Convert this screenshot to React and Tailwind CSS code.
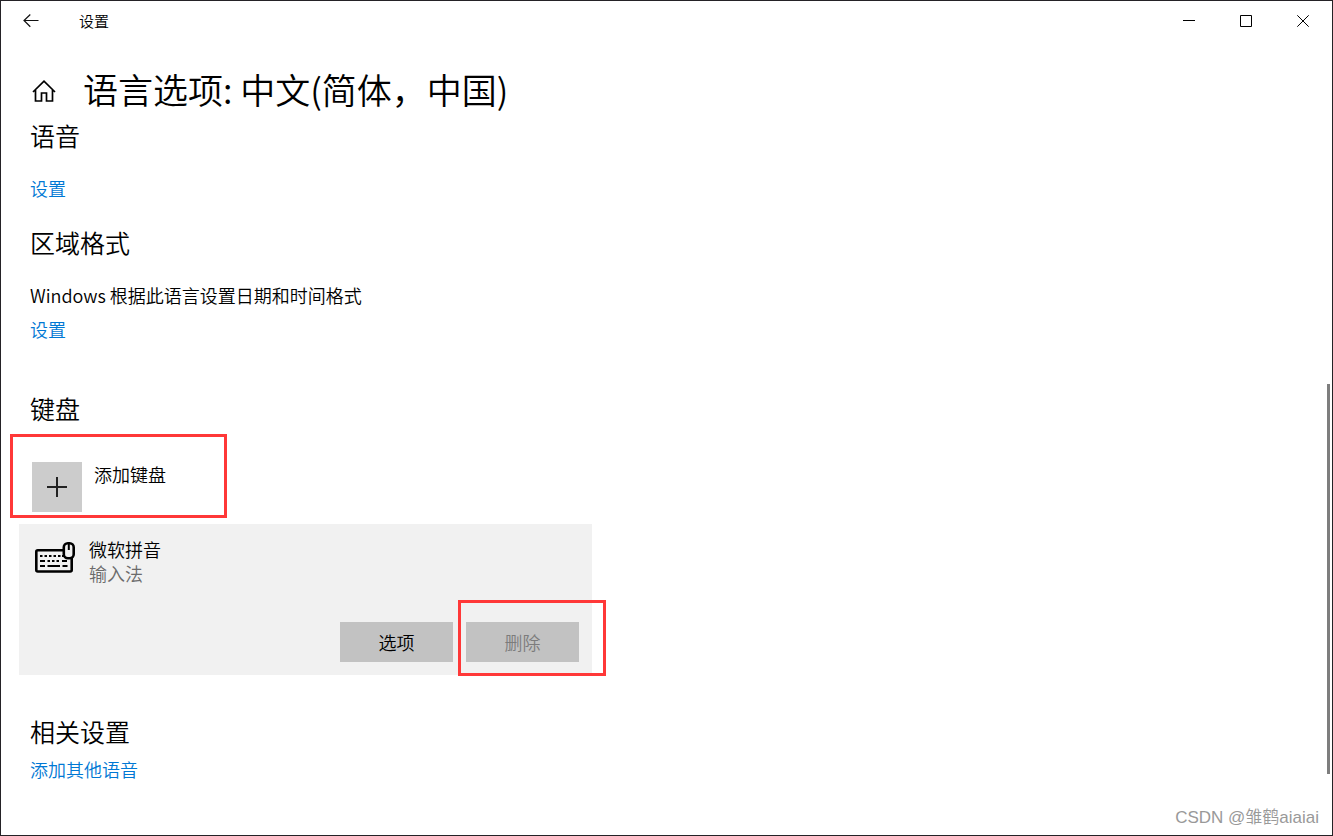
import React from 'react';

const BackIcon = () => (
    <svg width="16" height="14" viewBox="0 0 16 14" fill="none" stroke="#111" strokeWidth="1.2">
        <path d="M15.5 6.5H1M7.3 .5L1 6.5l6.3 6.2" />
    </svg>
);

const HomeIcon = () => (
    <svg width="24" height="22" viewBox="0 0 24 22" fill="none" stroke="#000" strokeWidth="1.7">
        <path d="M1 12L12 1.200l11 10.800M3.500 9.800v11.200h6v-8h5v8h6V9.800" />
    </svg>
);

const KeyboardIcon = () => (
    <svg width="40" height="31" viewBox="0 0 40 31" fill="none" stroke="#000">
        <rect x="1.300" y="8.300" width="35.400" height="21.200" rx="1.500" strokeWidth="2.600" />
        <path d="M5 14h2.500M9.500 14h2.500M14 14h2.500M18.500 14h2.500M23 14h2.500M27 14h2" strokeWidth="2" />
        <path d="M5 19h5M12.500 19h2.500M17 19h2.500M21.500 19h2.500M27 19h5" strokeWidth="2" />
        <path d="M5 24h5M12.500 24h12.500M27.500 24h5" strokeWidth="2" />
        <rect x="28.800" y="1.300" width="9.900" height="15" rx="4" fill="#f1f1f1" strokeWidth="2.600" />
        <path d="M33.800 1v7" strokeWidth="2" />
    </svg>
);

const windowButtons = [
    { label: '最小化', path: 'M0 5.500h12' },
    { label: '最大化', path: 'M.5 .5h11v11H.5z' },
    { label: '关闭', path: 'M.3 .3l11.400 11.400M11.700 .3L.3 11.700' },
];

const TitleBar = () => (
    <header className="flex h-10 items-center justify-between pr-px">
        <div className="flex items-center">
            <button type="button" aria-label="返回" className="flex h-10 w-[59px] items-center justify-center">
                <BackIcon />
            </button>
            <span className="ml-[19px] text-[15px] leading-6">设置</span>
        </div>
        <div className="flex">
            {windowButtons.map((button) => (
                <button
                    key={button.label}
                    type="button"
                    aria-label={button.label}
                    className="flex h-10 w-[57px] items-center justify-center"
                >
                    <svg width="12" height="12" viewBox="0 0 12 12" fill="none" stroke="#000">
                        <path d={button.path} />
                    </svg>
                </button>
            ))}
        </div>
    </header>
);

const Heading = ({ children }) => <h2 className="text-[25px] leading-8">{children}</h2>;

const TextLink = ({ children }) => (
    <a href="#" className="text-[#0078d4]">
        {children}
    </a>
);

const Highlight = ({ className }) => (
    <div className={`pointer-events-none absolute border-3 border-[#ff3838] ${className}`} />
);

const KeyboardCard = () => (
    <div className="-ml-[11px] mt-3 max-w-[573px] bg-[#f1f1f1] pt-[13px] pr-[13px] pb-[13px] pl-4">
        <div className="flex gap-[14px]">
            <div className="pt-[5px]">
                <KeyboardIcon />
            </div>
            <div>
                <p>微软拼音</p>
                <p className="text-[#6b6b6b]">输入法</p>
            </div>
        </div>
        <div className="mt-[37px] flex justify-end gap-[13px]">
            <button type="button" className="h-10 w-[113px] bg-[#c2c2c2]">
                选项
            </button>
            <div className="relative">
                <button type="button" disabled className="h-10 w-[113px] bg-[#c2c2c2] text-[#7c7c7c]">
                    删除
                </button>
                <Highlight className="-top-[22px] -right-[27px] -bottom-[14px] -left-2" />
            </div>
        </div>
    </div>
);

const App = () => {
    return (
        <div
            lang="zh-CN"
            className="relative min-h-screen border border-[#242226] bg-white font-['Noto_Sans_CJK_SC',sans-serif] text-[18px] leading-6 font-[350] text-black"
        >
            <TitleBar />
            <main className="pr-8 pb-12 pl-[29px]">
                <div className="mt-6 flex items-center gap-[27px]">
                    <a href="#" aria-label="主页" className="ml-[2px] pt-1">
                        <HomeIcon />
                    </a>
                    <h1 className="text-[35px] leading-[48px]">语言选项: 中文(简体，中国)</h1>
                </div>

                <section className="mt-[6px] flex flex-col items-start gap-[25px]">
                    <Heading>语音</Heading>
                    <TextLink>设置</TextLink>
                </section>

                <section className="mt-[26px] flex flex-col items-start">
                    <Heading>区域格式</Heading>
                    <p className="mt-[25px] mb-[10px]">Windows 根据此语言设置日期和时间格式</p>
                    <TextLink>设置</TextLink>
                </section>

                <section className="mt-[51px]">
                    <Heading>键盘</Heading>
                    <div className="relative mt-[38px] w-fit">
                        <button type="button" className="flex items-start gap-3 pl-[2px]">
                            <span className="flex size-[50px] items-center justify-center bg-[#ccc]">
                                <svg width="20" height="20" viewBox="0 0 20 20" stroke="#222" strokeWidth="2">
                                    <path d="M0 10h20M10 0v20" />
                                </svg>
                            </span>
                            <span>添加键盘</span>
                        </button>
                        <Highlight className="-top-7 -bottom-[6px] -left-5 w-[217px]" />
                    </div>
                    <KeyboardCard />
                </section>

                <section className="mt-10 flex flex-col items-start gap-[10px]">
                    <Heading>相关设置</Heading>
                    <TextLink>添加其他语音</TextLink>
                </section>
            </main>
            <div className="absolute top-[383px] right-[2px] bottom-[61px] w-[3px] bg-[#7e7e7e]" />
            <p className="absolute right-[13px] bottom-[5px] font-['Liberation_Sans','Noto_Sans_CJK_SC',sans-serif] text-[17px] text-[#999]">
                CSDN @雏鹤aiaiai
            </p>
        </div>
    );
};

export default App;
